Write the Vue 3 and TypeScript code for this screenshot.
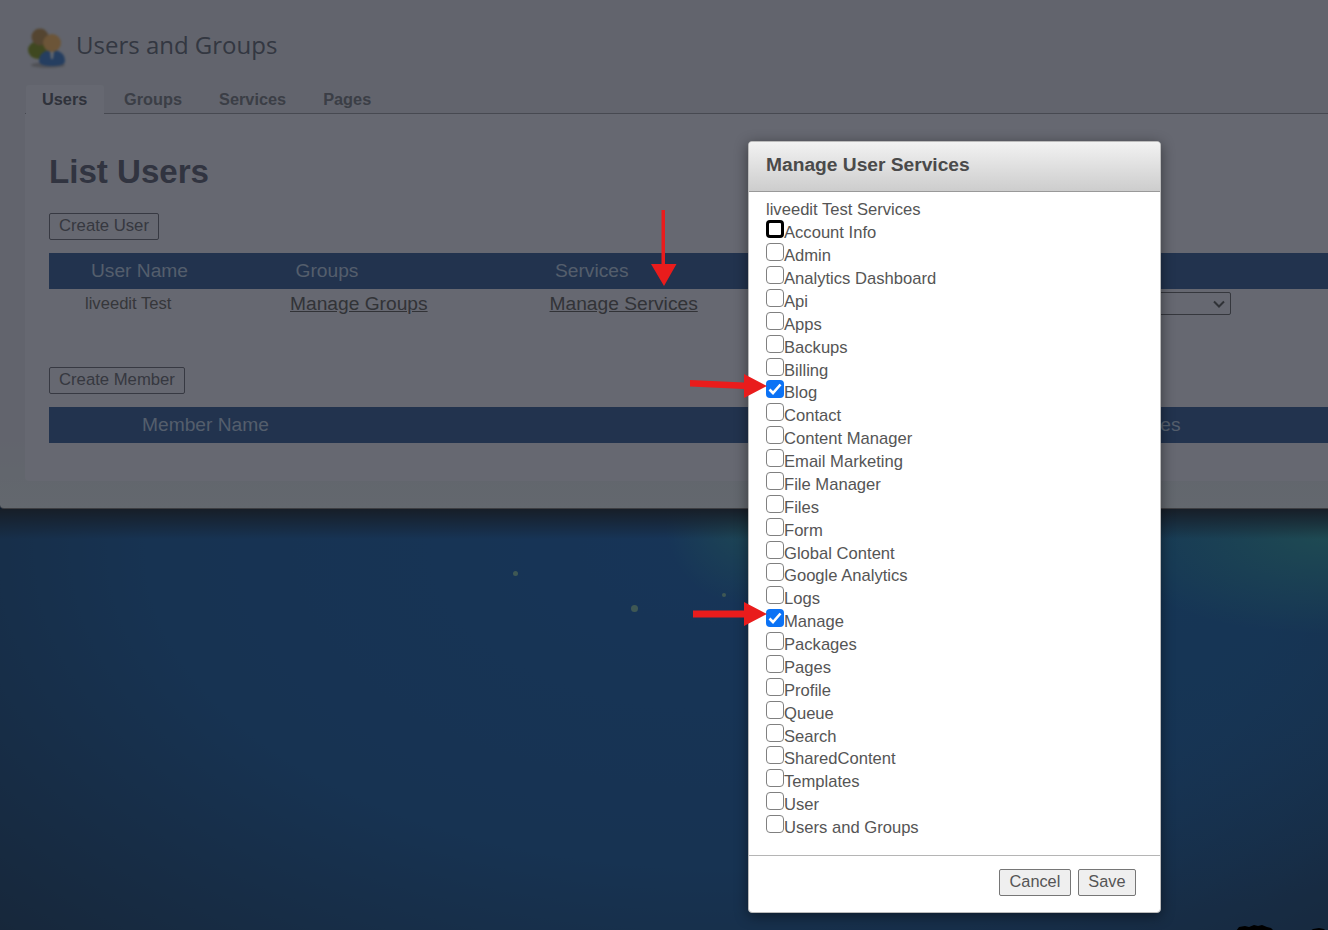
<script setup lang="ts">
const services: { name: string; checked?: boolean; focus?: boolean }[] = [
  { name: 'Account Info', focus: true },
  { name: 'Admin' },
  { name: 'Analytics Dashboard' },
  { name: 'Api' },
  { name: 'Apps' },
  { name: 'Backups' },
  { name: 'Billing' },
  { name: 'Blog', checked: true },
  { name: 'Contact' },
  { name: 'Content Manager' },
  { name: 'Email Marketing' },
  { name: 'File Manager' },
  { name: 'Files' },
  { name: 'Form' },
  { name: 'Global Content' },
  { name: 'Google Analytics' },
  { name: 'Logs' },
  { name: 'Manage', checked: true },
  { name: 'Packages' },
  { name: 'Pages' },
  { name: 'Profile' },
  { name: 'Queue' },
  { name: 'Search' },
  { name: 'SharedContent' },
  { name: 'Templates' },
  { name: 'User' },
  { name: 'Users and Groups' },
]
const tabs = ['Users', 'Groups', 'Services', 'Pages']
</script>

<template>
  <div class="desktop">
    <main class="page">
      <header class="title">
        <svg class="logo" width="40" height="42" viewBox="0 0 40 42">
          <ellipse cx="21" cy="39" rx="17" ry="3" fill="#a0a2ac" />
          <ellipse cx="11" cy="24" rx="10" ry="9" fill="#7f9040" />
          <circle cx="13" cy="11" r="8.500" fill="#a88a62" />
          <path d="M12 35c0-7 5-11 13-11s13 4 13 11c0 4-6 5-13 5s-13-1-13-5z" fill="#4a7cc0" />
          <path d="M23 25h4l-1 8h-2z" fill="#c8d0dc" />
          <circle cx="25" cy="17" r="9" fill="#d8aa70" />
        </svg>
        <h1>Users and Groups</h1>
      </header>
      <nav class="tabs">
        <a v-for="(t, i) in tabs" :key="t" class="tab" :class="{ active: i === 0 }">{{ t }}</a>
      </nav>
      <section class="panel">
        <h2>List Users</h2>
        <button class="btn-page">Create User</button>
        <div class="bar user-bar">
          <span>User Name</span><span>Groups</span><span>Services</span>
        </div>
        <div class="user-row">
          <span class="uname">liveedit Test</span>
          <a class="lnk">Manage Groups</a>
          <a class="lnk">Manage Services</a>
          <div class="sel">
            <svg width="12" height="8" viewBox="0 0 12 8">
              <path d="M1 1.500l5 5 5-5" fill="none" stroke="#60646e" stroke-width="2" />
            </svg>
          </div>
        </div>
        <button class="btn-page member">Create Member</button>
        <div class="bar member-bar">
          <span>Member Name</span><span class="last">Services</span>
        </div>
      </section>
    </main>
    <div class="wallpaper">
      <i class="dot d1"></i><i class="dot d2"></i><i class="dot d3"></i>
      <svg class="tree" width="100" height="10" viewBox="0 0 100 10">
        <path d="M0 10l3-4 6-1 4 1 5-2 4 1 4-1 5 2 4 1 3 3zM74 10l3-2 6-1 5 1 2 2z" fill="#000" />
      </svg>
    </div>
    <div class="overlay"></div>

    <div class="modal">
      <div class="modal-head">Manage User Services</div>
      <div class="modal-body">
        <div class="intro">liveedit Test Services</div>
        <label v-for="s in services" :key="s.name" class="row">
          <input type="checkbox" :checked="s.checked" :class="{ focus: s.focus }" />{{ s.name }}
        </label>
      </div>
      <div class="modal-foot">
        <button class="btn">Cancel</button>
        <button class="btn">Save</button>
      </div>
    </div>

    <svg class="arrows" width="1328" height="930" viewBox="0 0 1328 930">
      <g fill="#e91c1c">
        <path d="M661.500 210h3.500v54h11.500l-12.500 22-13-22h10.500z" />
        <path d="M690 380l54 2.500V374l23 12-23 12v-9l-54-2.500z" />
        <path d="M693 610.500h51V602l23 12-23 12v-8.500h-51z" />
      </g>
    </svg>
  </div>
</template>

<style>
html, body { margin: 0; background: #1a3a60; }
</style>

<style scoped>
.desktop {
  position: relative;
  width: 1328px;
  height: 930px;
  overflow: hidden;
  font-family: "Liberation Sans", Arial, sans-serif;
  display: flex;
  flex-direction: column;
}
.page {
  height: 509px;
  background: linear-gradient(#c4c9da 0, #c4c9da 440px, #c6d0dc 508px);
  padding: 0 0 0 25px;
  box-sizing: border-box;
  flex: none;
  border-bottom: 1px solid #7a7c84;
  border-radius: 0 0 0 4px;
}
.title {
  height: 85px;
  display: flex;
  align-items: center;
  padding: 6px 0 0 2px;
  box-sizing: border-box;
  gap: 9px;
}
.logo { margin-top: 2px; filter: blur(0.8px); }
h1 {
  margin: -2px 0 0;
  font: 400 24px "Open Sans", sans-serif;
  color: #666e82;
}
.tabs {
  display: flex;
  height: 28px;
  border-bottom: 1px solid #8e92a2;
  box-sizing: content-box;
}
.tab {
  font-weight: 700;
  font-size: 16.320px;
  color: #767c8c;
  padding: 5px 18.500px 0 18.500px;
  line-height: 18px;
}
.tab.active {
  background: #ccd1e2;
  color: #5e6476;
  padding: 5px 0 0 16px;
  border-radius: 3px 3px 0 0;
  height: 29px;
  box-sizing: border-box;
  width: 78px;
  margin: 0 1.500px -1px 1px;
}
.panel {
  background: #ccd1e2;
  height: 367px;
  padding: 38px 0 0 24px;
  box-sizing: border-box;
  border-radius: 0 0 0 4px;
}
h2 {
  margin: 0;
  font-size: 33.100px;
  line-height: 40px;
  font-weight: 700;
  color: #626880;
}
.btn-page {
  display: block;
  font: 16.700px "Liberation Sans", sans-serif;
  color: #6c7080;
  background: transparent;
  border: 1px solid #6e7284;
  border-radius: 2px;
  height: 27px;
  padding: 0 9px 2px;
  margin-top: 21px;
}
.bar {
  background: #44669c;
  height: 36px;
  margin-top: 13px;
  color: #a8bcd8;
  font-size: 19.200px;
  display: flex;
  align-items: center;
  position: relative;
}
.user-bar span:nth-child(1) { margin-left: 42px; width: 204.500px; }
.user-bar span:nth-child(2) { width: 259.500px; }
.member-bar { margin-top: 13px; }
.member-bar span:first-child { margin-left: 93px; }
.member-bar .last { position: absolute; left: 1058px; }
.user-row {
  display: flex;
  align-items: center;
  height: 28px;
  padding-top: 2px;
  box-sizing: border-box;
  color: #6c6e76;
  font-size: 16.600px;
  position: relative;
}
.uname { margin-left: 36px; width: 205px; }
.lnk { font-size: 19.200px; text-decoration: underline; color: #64666f; width: 259.500px; }
.sel {
  position: absolute;
  left: 1000px;
  top: 3px;
  width: 182px;
  height: 23px;
  box-sizing: border-box;
  border: 1px solid #6a6e7a;
  border-radius: 2px;
  display: flex;
  align-items: center;
  justify-content: flex-end;
  padding-right: 5px;
}
.member { margin-top: 50px; }
.wallpaper {
  flex: 1;
  position: relative;
  background:
    linear-gradient(180deg, #2f3d50 0px, rgba(47, 61, 80, 0) 30px),
    radial-gradient(circle 80px at 745px 15px, rgba(70, 170, 165, 0.55) 0%, rgba(70, 170, 165, 0) 100%),
    radial-gradient(ellipse 230px 100px at 1328px 25px, rgba(65, 160, 165, 0.8) 0%, rgba(65, 160, 165, 0) 100%),
    radial-gradient(ellipse 420px 340px at 1170px 60px, #2c6cac 0%, rgba(44, 108, 172, 0) 100%),
    radial-gradient(ellipse 1150px 640px at 720px 40px, #2e6ab0 0%, #2f66a4 50%, #2e5078 85%, #2e4660 100%);
}
.dot { position: absolute; border-radius: 50%; background: #7fb0a8; filter: blur(0.5px); }
.d1 { left: 513px; top: 62px; width: 5px; height: 5px; }
.d2 { left: 631px; top: 96px; width: 7px; height: 7px; }
.d3 { left: 722px; top: 84px; width: 4px; height: 4px; }
.tree { position: absolute; left: 1236px; top: 412px; }
.overlay {
  position: absolute;
  inset: 0;
  background: rgba(0, 0, 0, 0.5);
}
.modal {
  position: absolute;
  left: 748px;
  top: 141px;
  width: 413px;
  height: 772px;
  background: #fff;
  border: 1px solid #bbb;
  border-radius: 4px;
  box-sizing: border-box;
  box-shadow: 0 3px 14px rgba(0, 0, 0, 0.45);
  display: flex;
  flex-direction: column;
  color: #555;
}
.modal-head {
  height: 50px;
  background: linear-gradient(#f2f2f2, #cdcdcd);
  border-bottom: 1px solid #999;
  box-sizing: border-box;
  padding: 0 17px;
  font-size: 19.200px;
  font-weight: 700;
  line-height: 46px;
  color: #4a4a4a;
  border-radius: 3px 3px 0 0;
}
.modal-body {
  height: 664px;
  padding: 8px 17px 0;
  box-sizing: border-box;
  font-size: 16.600px;
  border-bottom: 1px solid #b5b5b5;
}
.intro { line-height: 20px; height: 20.300px; }
.row { display: block; height: 22.880px; line-height: 22.880px; white-space: nowrap; }
input[type="checkbox"] {
  appearance: none;
  box-sizing: border-box;
  width: 18px;
  height: 18px;
  margin: 0;
  border: 1.500px solid #808080;
  border-radius: 4px;
  background: #fff;
}
input[type="checkbox"]:checked {
  border: none;
  background: #0b72f5 url("data:image/svg+xml,%3Csvg xmlns='http://www.w3.org/2000/svg' viewBox='0 0 18 18'%3E%3Cpath d='M3.500 9.500l3.500 3.500 7.500-8.500' fill='none' stroke='%23fff' stroke-width='2.600'/%3E%3C/svg%3E") center/18px no-repeat;
}
input.focus { border: 3px solid #000; border-radius: 4px; }
.modal-foot {
  flex: 1;
  display: flex;
  justify-content: flex-end;
  gap: 7px;
  padding: 13px 24px 0 0;
}
.btn {
  font: 16.320px "Liberation Sans", sans-serif;
  color: #555;
  height: 27px;
  padding: 0 9.500px 2px;
  background: #efefef;
  border: 1px solid #767676;
  border-radius: 2px;
}
.arrows { position: absolute; left: 0; top: 0; pointer-events: none; }
</style>
